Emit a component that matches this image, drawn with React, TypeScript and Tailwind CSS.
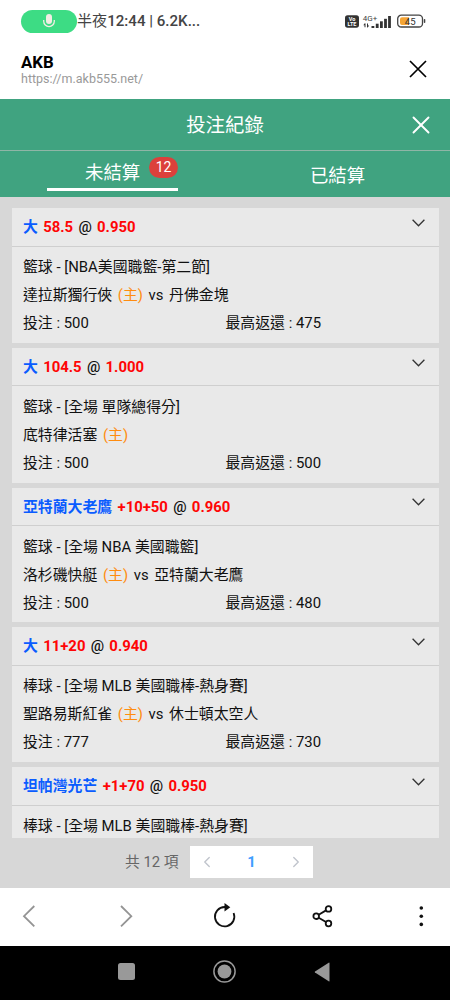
import { ChevronLeft, ChevronRight, X } from "lucide-react";

interface Bet {
    pick: string;
    line: string;
    odds: string;
    league: string;
    home?: string;
    away?: string;
    stake?: number;
    payout?: number;
}

const bets: Bet[] = [
    { pick: "大", line: "58.5", odds: "0.950", league: "籃球 - [NBA美國職籃-第二節]", home: "達拉斯獨行俠", away: "丹佛金塊", stake: 500, payout: 475 },
    { pick: "大", line: "104.5", odds: "1.000", league: "籃球 - [全場 單隊總得分]", home: "底特律活塞", stake: 500, payout: 500 },
    { pick: "亞特蘭大老鷹", line: "+10+50", odds: "0.960", league: "籃球 - [全場 NBA 美國職籃]", home: "洛杉磯快艇", away: "亞特蘭大老鷹", stake: 500, payout: 480 },
    { pick: "大", line: "11+20", odds: "0.940", league: "棒球 - [全場 MLB 美國職棒-熱身賽]", home: "聖路易斯紅雀", away: "休士頓太空人", stake: 777, payout: 730 },
    { pick: "坦帕灣光芒", line: "+1+70", odds: "0.950", league: "棒球 - [全場 MLB 美國職棒-熱身賽]" },
];

const StatusBar = () => (
    <div className="flex h-10 shrink-0 items-center pl-[21px] pr-[24px] pt-0.5">
        <div className="flex h-[23px] w-[56px] shrink-0 items-center justify-center rounded-full bg-[#3ddc84]">
            <svg width="14" height="16" viewBox="0 0 14 16" fill="none">
                <rect x="4" y="1" width="6" height="10" rx="3" fill="#f3ede4" />
                <path d="M1.7 7v1.3a5.3 5.3 0 0 0 10.6 0V7" stroke="#f3ede4" strokeWidth="1.3" />
            </svg>
        </div>
        <span className="whitespace-nowrap text-[15.1px] text-[#444]">
            半夜<span className="font-medium">12:44 | 6.2K...</span>
        </span>
        <div className="ml-auto flex items-center">
            <svg width="47" height="15" viewBox="0 0 47 15" fill="#333">
                <rect x="0" y="1.3" width="14" height="12.4" rx="2.6" />
                <text x="7" y="7" fill="#fff" fontSize="5.5" fontWeight="700" textAnchor="middle">Vo</text>
                <text x="7" y="12.3" fill="#fff" fontSize="5.5" fontWeight="700" textAnchor="middle">LTE</text>
                <text x="17.8" y="6.6" fontSize="8" fill="#444">4G+</text>
                <path d="M18.3 11.2 20 9l.5.7v3.6h-1v-2.1zM24.2 11.5l-1.7 2.2-.5-.7V9.4h1v2.1z" />
                <rect x="26.5" y="12" width="2.8" height="2" />
                <rect x="30.8" y="9.7" width="2.8" height="4.3" />
                <rect x="35" y="7.3" width="2.8" height="6.7" />
                <rect x="39.1" y="4.8" width="2.8" height="9.2" />
                <rect x="43.1" y="2" width="2.8" height="12" />
            </svg>
            <svg className="ml-[5px]" width="29" height="14" viewBox="0 0 29 14">
                <rect x="0.7" y="1.2" width="24.8" height="11.8" rx="3.6" fill="#fff" stroke="#444" strokeWidth="1.3" />
                <path d="M5 3.2h7v7.8H5a2 2 0 0 1-2-2V5.2a2 2 0 0 1 2-2z" fill="#f5a534" />
                <rect x="26.8" y="5" width="1.5" height="4" rx="0.7" fill="#444" />
                <text x="13.2" y="10.6" fontSize="9.6" fill="#333" textAnchor="middle">45</text>
            </svg>
        </div>
    </div>
);

const BetCard = ({ bet }: { bet: Bet }) => (
    <div className="mb-[5px] h-[134.75px] shrink-0 bg-[#e9e9e9] text-[14.88px] text-[#111]">
        <div className="flex h-[38.5px] items-center gap-x-[5.3px] border-b border-[#cfcfcf] px-[11px] pt-px text-[14.88px] font-bold">
            <span className="text-[#0a5cff]">{bet.pick}</span>
            <span className="text-[#ff0505]">{bet.line}</span>
            <span className="font-medium">@</span>
            <span className="text-[#ff0505]">{bet.odds}</span>
            <svg className="-mt-[9px] ml-auto mr-[3px]" width="13" height="8" viewBox="0 0 13 8" fill="none" stroke="#333" strokeWidth="1.3">
                <path d="m.6.8 5.9 6 5.9-6" />
            </svg>
        </div>
        <div className="px-[11px] pt-[6.7px] leading-[28px]">
            <p>{bet.league}</p>
            {bet.home && (
                <>
                    <div className="flex gap-x-[5.6px]">
                        <span>{bet.home}</span>
                        <span className="text-[#ff8c0f]">(主)</span>
                        {bet.away && (
                            <>
                                <span>vs</span>
                                <span>{bet.away}</span>
                            </>
                        )}
                    </div>
                    <div className="grid grid-cols-2">
                        <span>投注 : {bet.stake}</span>
                        <span>最高返還 : {bet.payout}</span>
                    </div>
                </>
            )}
        </div>
    </div>
);

const App = () => {
    return (
        <div className="flex h-[1000px] w-[450px] flex-col overflow-hidden bg-white font-['Roboto','Noto_Sans_CJK_TC',sans-serif]">
            <StatusBar />
            <header className="flex h-[59px] shrink-0 items-center justify-between pl-[21px] pr-[18px]">
                <div>
                    <h1 className="text-[16.8px] font-bold leading-[18px] text-black">AKB</h1>
                    <p className="text-[12.5px] leading-[16px] text-[#999]">https://m.akb555.net/</p>
                </div>
                <svg className="mr-[5px] -mt-[2px]" width="18" height="18" viewBox="0 0 18 18" fill="none" stroke="#000" strokeWidth="1.7">
                    <path d="m1 1 16 16M17 1 1 17" />
                </svg>
            </header>

            <div className="flex h-[52px] shrink-0 items-center border-b border-[#8fb5a6] bg-[#40a380] pl-[44px] pr-[14px] text-white">
                <h2 className="flex-1 pt-[3px] text-center text-[19.4px]">投注紀錄</h2>
                <X size={30} strokeWidth={1.5} />
            </div>
            <div className="grid h-[46px] shrink-0 grid-cols-2 bg-[#40a380] text-[18.4px] text-white">
                <div className="flex justify-center">
                    <div className="relative h-[39.5px] w-[131px] border-b-[3.5px] border-white pl-[38px] leading-[43px]">
                        未結算
                        <span className="absolute right-0 top-[6px] flex h-[21px] w-[29px] items-center justify-center rounded-full bg-[#dc403b] text-[14px]">12</span>
                    </div>
                </div>
                <div className="text-center leading-[49px]">已結算</div>
            </div>

            <main className="flex h-[691px] shrink-0 flex-col bg-[#d7d7d7]">
                <div className="ml-[12px] mr-[11px] mt-[11px] flex h-[629.5px] shrink-0 flex-col overflow-hidden">
                    {bets.map((bet, i) => (
                        <BetCard key={i} bet={bet} />
                    ))}
                </div>
                <div className="mt-[8.5px] flex h-[32px] items-center pl-[125px] text-[14.8px] text-[#666]">
                    <span className="w-[65px] whitespace-nowrap">共 12 項</span>
                    <div className="flex h-full w-[123px] items-center justify-between bg-white px-[8px] text-[#c0c4cc]">
                        <ChevronLeft size={18} strokeWidth={1.8} />
                        <span className="font-bold text-[#409eff]">1</span>
                        <ChevronRight size={18} strokeWidth={1.8} />
                    </div>
                </div>
            </main>

            <nav className="flex h-[58px] shrink-0 items-center bg-white pb-[2px] pl-[21px]">
                <svg width="16" height="24" viewBox="0 0 16 24" fill="none" stroke="#949494" strokeWidth="1.8">
                    <path d="M13.3 2 3 12.2l10.3 10.2" />
                </svg>
                <svg className="ml-[81px]" width="16" height="24" viewBox="0 0 16 24" fill="none" stroke="#949494" strokeWidth="1.8">
                    <path d="m3 2 10.3 10.2L3 22.4" />
                </svg>
                <svg className="ml-[78px]" width="26" height="28" viewBox="0 0 26 28" fill="none" stroke="#111" strokeWidth="1.8">
                    <path d="M13.5 5h-.9a9.7 9.7 0 1 0 9 6" />
                    <path d="m12.5 1 5.8 4.3-5.8 4.2z" fill="#111" stroke="none" />
                </svg>
                <svg className="ml-[74px]" width="22" height="24" viewBox="0 0 22 24" fill="none" stroke="#111" strokeWidth="1.8">
                    <circle cx="4.2" cy="12.2" r="2.8" />
                    <circle cx="16.5" cy="4.9" r="2.8" />
                    <circle cx="16.5" cy="19.5" r="2.8" />
                    <path d="m6.7 10.7 7.3-4.3M6.7 13.7l7.3 4.3" />
                </svg>
                <svg className="ml-[79px]" width="17" height="24" viewBox="0 0 17 24" fill="#111">
                    <circle cx="8.3" cy="4" r="1.8" />
                    <circle cx="8.3" cy="12.2" r="1.8" />
                    <circle cx="8.3" cy="20.4" r="1.8" />
                </svg>
            </nav>

            <div className="flex h-[54px] shrink-0 items-center justify-between bg-black pb-[3px] pl-[118px] pr-[120px]">
                <div className="size-[16.5px] rounded-[2.5px] bg-[#999]" />
                <svg width="23" height="23" viewBox="0 0 23 23" fill="#999">
                    <circle cx="11.5" cy="11.5" r="10.6" fill="none" stroke="#999" strokeWidth="1.5" />
                    <circle cx="11.5" cy="11.5" r="6.9" />
                </svg>
                <svg width="16" height="20" viewBox="0 0 16 20" fill="#999">
                    <path d="M15.5 1v18q0 .8-.8.3L1 10.5q-.6-.5 0-1L14.7.7q.8-.5.8.3z" />
                </svg>
            </div>
        </div>
    );
};

export default App;
